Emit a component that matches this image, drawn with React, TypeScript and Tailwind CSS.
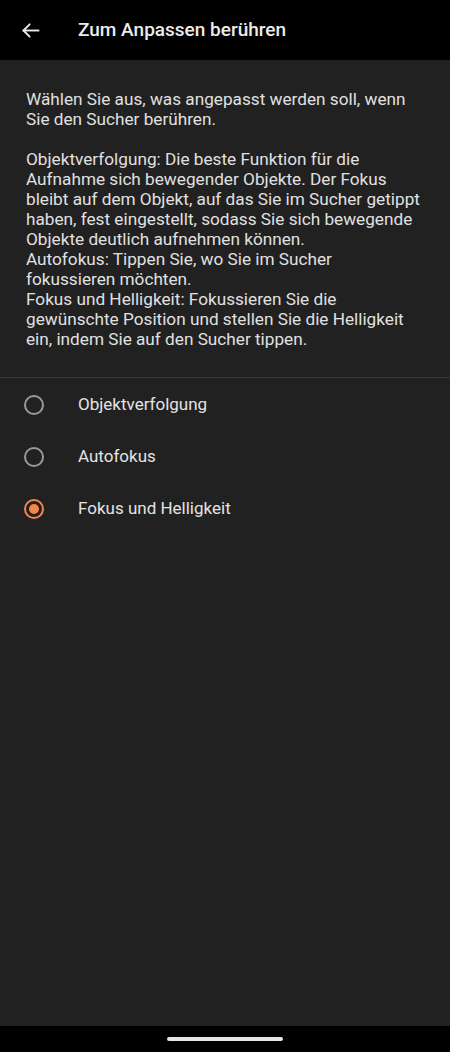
import { useState } from 'react'

const options = ['Objektverfolgung', 'Autofokus', 'Fokus und Helligkeit']

function Radio({ checked }: { checked: boolean }) {
  return (
    <div
      className={`w-[20px] h-[20px] rounded-full border-2 flex items-center justify-center ${
        checked ? 'border-[#f5854a]' : 'border-[#9a9a9a]'
      }`}
    >
      {checked && <div className="w-[10px] h-[10px] rounded-full bg-[#f5854a]" />}
    </div>
  )
}

export default function App() {
  const [selected, setSelected] = useState(2)

  return (
    <div
      className="w-[450px] h-[1052px] flex flex-col bg-[#212121] text-[#e3e3e3]"
      style={{ fontFamily: 'Roboto, "Noto Sans", sans-serif' }}
    >
      {/* app bar */}
      <div className="h-[60px] bg-black flex items-center shrink-0">
        <div className="w-[78px] pl-[20px]">
          <svg width="21" height="21" viewBox="0 0 24 24" fill="none" stroke="#e8e8e8" strokeWidth="2.2" strokeLinecap="square">
            <path d="M21 12H4" />
            <path d="M11 5l-7 7 7 7" strokeLinecap="round" strokeLinejoin="round" />
          </svg>
        </div>
        <h1 className="text-[19px] font-medium text-[#ebebeb]">Zum Anpassen berühren</h1>
      </div>

      {/* description */}
      <div className="pl-[26px] pr-[27px] pt-[29px] pb-[28px] text-[17.2px] leading-[20px] text-[#e0e0e0] border-b border-[#3a3a3a]">
        <p>Wählen Sie aus, was angepasst werden soll, wenn Sie den Sucher berühren.</p>
        <p className="mt-[20px]">
          Objektverfolgung: Die beste Funktion für die Aufnahme sich bewegender Objekte. Der Fokus bleibt auf dem Objekt, auf das Sie im Sucher getippt haben, fest eingestellt, sodass Sie sich bewegende Objekte deutlich aufnehmen können.
          <br />
          Autofokus: Tippen Sie, wo Sie im Sucher fokussieren möchten.
          <br />
          Fokus und Helligkeit: Fokussieren Sie die gewünschte Position und stellen Sie die Helligkeit ein, indem Sie auf den Sucher tippen.
        </p>
      </div>

      {/* options */}
      <div className="flex flex-col pt-[1px]">
        {options.map((o, i) => (
          <button
            key={o}
            onClick={() => setSelected(i)}
            className="h-[52px] flex items-center text-left"
          >
            <div className="w-[78px] pl-[24px]">
              <Radio checked={selected === i} />
            </div>
            <span className="text-[17px] text-[#e3e3e3]">{o}</span>
          </button>
        ))}
      </div>

      <div className="flex-1" />

      {/* nav bar */}
      <div className="h-[26px] bg-black flex items-center justify-center shrink-0">
        <div className="w-[116px] h-[4px] rounded-full bg-[#e6e6e6]" />
      </div>
    </div>
  )
}
